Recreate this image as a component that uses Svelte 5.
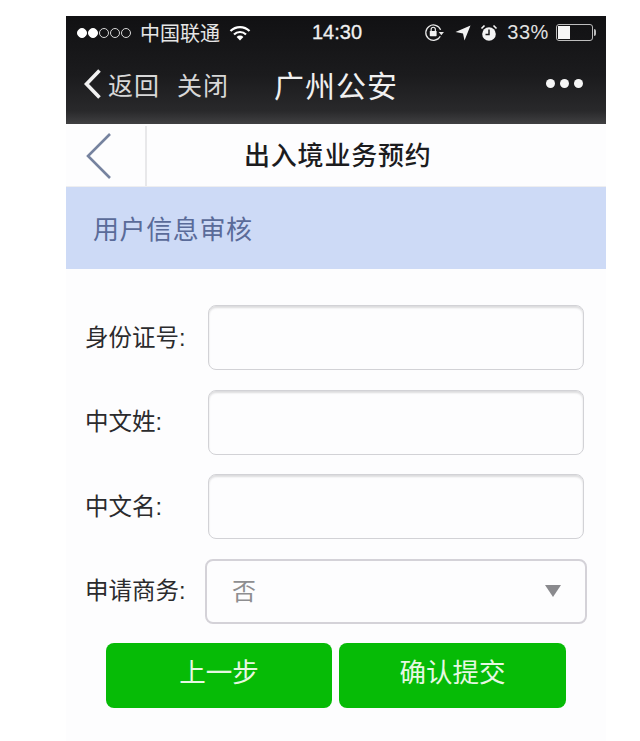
<script lang="ts">
  const fields = ['身份证号:', '中文姓:', '中文名:'];
</script>

<div class="phone">
  <div class="topbar">
    <div class="status">
      <div class="status__left">
        <span class="signal">
          {#each [1, 1, 0, 0, 0] as on}
            <i class:on></i>
          {/each}
        </span>
        <span class="carrier">中国联通</span>
        <svg class="wifi" width="22" height="16" viewBox="0 0 22 16">
          <path d="M1.5 6 A13.5 13.5 0 0 1 20.5 6" fill="none" stroke="#fff" stroke-width="2.2" />
          <path d="M5 9.5 A8.5 8.5 0 0 1 17 9.5" fill="none" stroke="#fff" stroke-width="2.2" />
          <path d="M11 15.5 L7.6 12 A4.8 4.8 0 0 1 14.4 12 Z" fill="#fff" />
        </svg>
      </div>
      <span class="time">14:30</span>
      <div class="status__right">
        <svg class="lock" width="21" height="19" viewBox="0 0 20 18">
          <path d="M15.5 12.5 A7.3 7.3 0 1 1 15.8 6.5" fill="none" stroke="#e8e8e8" stroke-width="1.2" />
          <path d="M14 8.5 H19 L16.5 11.5 Z" fill="#e8e8e8" />
          <rect x="5.5" y="7.5" width="6.5" height="5" rx="0.6" fill="#f2f2f2" />
          <path d="M6.8 7.5 V6 A2 2 0 0 1 10.8 6 V7.5" fill="none" stroke="#f2f2f2" stroke-width="1.1" />
        </svg>
        <svg class="arrow" width="16" height="16" viewBox="0 0 16 16">
          <path d="M0.5 7 L15.5 0.5 L9.5 15.5 L8 8.5 Z" fill="#f2f2f2" />
        </svg>
        <svg class="alarm" width="18" height="18" viewBox="0 0 18 18">
          <circle cx="9" cy="10" r="6.8" fill="#f4f4f4" />
          <path d="M9 5.5 V10.5 H5.5" fill="none" stroke="#1c1c1e" stroke-width="1.5" />
          <path d="M1.5 4.5 L4.5 1.5 M16.5 4.5 L13.5 1.5" stroke="#f4f4f4" stroke-width="1.6" />
        </svg>
        <span class="percent">33%</span>
        <span class="battery"><span class="battery__level"></span></span>
      </div>
    </div>

    <div class="nav">
      <svg class="nav__back" width="20" height="32" viewBox="0 0 20 32">
        <path d="M16.5 2.5 L3.5 16 L16.5 29.5" fill="none" stroke="#f2f2f2" stroke-width="3.6" />
      </svg>
      <span class="nav__link">返回</span>
      <span class="nav__link nav__link--close">关闭</span>
      <span class="nav__title">广州公安</span>
      <span class="nav__more"><i></i><i></i><i></i></span>
    </div>
  </div>

  <header class="page-head">
    <div class="page-head__back">
      <svg width="28" height="50" viewBox="0 0 28 50">
        <path d="M25 3 L3 25 L25 47" fill="none" stroke="#76839f" stroke-width="2.6" />
      </svg>
    </div>
    <h1>出入境业务预约</h1>
  </header>

  <div class="band">用户信息审核</div>

  <form class="form">
    {#each fields as label}
      <div class="row">
        <span class="row__label">{label}</span>
        <input class="row__input" type="text" />
      </div>
    {/each}

    <div class="row row--select">
      <span class="row__label">申请商务:</span>
      <div class="select">
        <span class="select__value">否</span>
        <span class="select__caret"></span>
      </div>
    </div>

    <div class="actions">
      <button type="button">上一步</button>
      <button type="button">确认提交</button>
    </div>
  </form>
</div>

<style>
  :global(body) {
    background: #ffffff;
    margin: 0;
  }

  .phone {
    width: 540px;
    height: 725px;
    margin: 16px 0 0 66px;
    background: #fdfdfe;
    font-family: "Liberation Sans", "Noto Sans CJK SC", sans-serif;
    overflow: hidden;
  }

  .topbar {
    height: 108px;
    box-sizing: border-box;
    background: linear-gradient(#111113 0%, #1b1b1d 55%, #29292b 88%, #404042 100%);
    color: #f2f2f2;
  }

  .status {
    height: 33px;
    padding: 0 9px 0 11px;
    display: grid;
    grid-template-columns: 1fr auto 1fr;
    align-items: center;
  }

  .status__left {
    display: flex;
    align-items: center;
  }

  .status__right {
    display: flex;
    align-items: center;
    justify-content: flex-end;
    gap: 9px;
  }

  .signal {
    display: flex;
    gap: 1px;
  }

  .signal i {
    width: 10px;
    height: 10px;
    box-sizing: border-box;
    border: 1px solid #d8d8d8;
    border-radius: 50%;
  }

  .signal i.on {
    background: #ffffff;
    border-color: #ffffff;
  }

  .carrier {
    font-size: 20px;
    margin-left: 9px;
    color: #e6e6e6;
  }

  .wifi {
    margin-left: 9px;
  }

  .time {
    font-size: 20px;
    font-weight: 400;
    color: #f0f0f0;
    -webkit-text-stroke: 0.3px #f0f0f0;
  }

  .percent {
    font-size: 20px;
    letter-spacing: 0.6px;
    color: #e2e2e2;
  }

  .lock {
    margin-right: -1px;
  }

  .arrow {
    margin-left: 2px;
  }

  .alarm {
    margin-left: 0;
  }

  .battery {
    position: relative;
    width: 37px;
    height: 17px;
    margin-left: -2px;
    margin-right: 4px;
    box-sizing: border-box;
    border: 1px solid #bdbdbd;
    border-radius: 3px;
    padding: 1px;
  }

  .battery::after {
    content: "";
    position: absolute;
    right: -4px;
    top: 4px;
    width: 2px;
    height: 7px;
    background: #bdbdbd;
    border-radius: 0 2px 2px 0;
  }

  .battery__level {
    display: block;
    width: 12px;
    height: 100%;
    background: #f6f6f6;
  }

  .nav {
    height: 75px;
    display: flex;
    align-items: center;
    padding: 0 0 6px 17px;
    box-sizing: border-box;
  }

  .nav__back {
    margin-right: 5px;
  }

  .nav__link {
    font-size: 25px;
    color: #d8d8d8;
    letter-spacing: 1px;
  }

  .nav__link--close {
    margin-left: 17px;
  }

  .nav__title {
    font-size: 30px;
    margin-left: 45px;
    color: #f0f0f0;
    letter-spacing: 1px;
  }

  .nav__more {
    margin-left: auto;
    margin-right: 23px;
    display: flex;
    gap: 5px;
  }

  .nav__more i {
    width: 9px;
    height: 9px;
    border-radius: 50%;
    background: #f6f6f6;
  }

  .page-head {
    height: 63px;
    display: flex;
    align-items: center;
    background: #fdfdfe;
    box-shadow: inset 0 -1px 0 #eeeef0;
  }

  .page-head__back {
    width: 81px;
    height: 60px;
    box-sizing: border-box;
    border-right: 2px solid #e8e8ea;
    padding-left: 19px;
    display: flex;
    align-items: center;
  }

  h1 {
    margin: 0 0 4px 97px;
    font-size: 26px;
    font-weight: 500;
    letter-spacing: 0.8px;
    color: #1c1c1e;
  }

  .band {
    height: 82px;
    box-sizing: border-box;
    padding: 0 0 2px 27px;
    display: flex;
    align-items: center;
    background: #cddaf6;
    color: #5a6b99;
    font-size: 26px;
    letter-spacing: 0.6px;
  }

  .form {
    padding-top: 36px;
  }

  .row {
    height: 65px;
    margin-bottom: 19.5px;
    display: flex;
    align-items: center;
    padding-left: 19px;
  }

  .row__label {
    width: 123px;
    padding-bottom: 4px;
    font-size: 23.5px;
    color: #2b2b2d;
    white-space: nowrap;
  }

  .row__input {
    width: 376px;
    height: 65px;
    padding: 0;
    box-sizing: border-box;
    background: #fdfdfe;
    border: 1.5px solid #d2d2d6;
    border-radius: 8px;
    box-shadow: inset 0 2px 2px #dcdcde;
  }

  .row--select {
    margin-bottom: 19px;
  }

  .row--select .row__label {
    width: 120px;
  }

  .select {
    width: 382px;
    height: 65px;
    box-sizing: border-box;
    padding: 0 25px;
    display: flex;
    align-items: center;
    justify-content: space-between;
    border: 2px solid #d4d2d8;
    border-radius: 8px;
    color: #8e8e90;
    font-size: 24px;
  }

  .select__value {
    padding-bottom: 4px;
  }

  .select__caret {
    width: 0;
    height: 0;
    margin-right: -1px;
    border-left: 8px solid transparent;
    border-right: 8px solid transparent;
    border-top: 12px solid #8a8a8e;
  }

  .actions {
    display: flex;
    gap: 7px;
    padding-left: 40px;
  }

  button {
    width: 226px;
    height: 65px;
    padding: 0 0 10px;
    border: none;
    border-radius: 8px;
    background: #06bb06;
    color: #e6f8e2;
    font: inherit;
    font-size: 26.5px;
  }

  button:last-child {
    width: 227px;
  }
</style>
